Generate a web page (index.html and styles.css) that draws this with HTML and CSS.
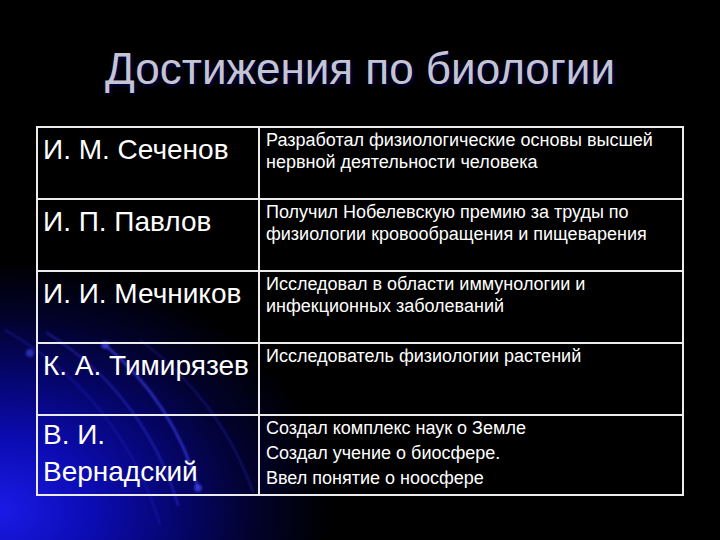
FILE: index.html
```html
<!DOCTYPE html>
<html lang="ru">
<head>
<meta charset="utf-8">
<title>Достижения по биологии</title>
<link rel="stylesheet" href="styles.css">
</head>
<body>
<div class="slide">
  <svg class="arcs" width="720" height="540" viewBox="0 0 720 540" aria-hidden="true">
    <g fill="none" stroke-linecap="round">
      <path d="M 105 345 A 285 285 0 0 1 198 488" stroke="#4040f4" stroke-width="2.5" opacity="0.7"/>
      <path d="M 47 333 A 300 300 0 0 1 178 505" stroke="#3434e0" stroke-width="2" opacity="0.55"/>
      <path d="M 5 330 A 330 330 0 0 1 160 525" stroke="#2a2ad0" stroke-width="1.5" opacity="0.45"/>
      <path d="M 140 340 A 320 320 0 0 1 253 492" stroke="#3030dc" stroke-width="1.5" opacity="0.45"/>
    </g>
    <circle cx="30" cy="353" r="4" fill="#4a4aff" opacity="0.55"/>
    <circle cx="105" cy="345" r="4" fill="#4a4aff" opacity="0.6"/>
    <circle cx="198" cy="488" r="4" fill="#4a4aff" opacity="0.6"/>
  </svg>
  <h1 class="title">Достижения по биологии</h1>
  <table class="grid">
    <tr class="row">
      <td class="name">И. М. Сеченов</td>
      <td class="desc">Разработал физиологические основы высшей нервной деятельности человека</td>
    </tr>
    <tr class="row">
      <td class="name">И. П. Павлов</td>
      <td class="desc">Получил Нобелевскую премию за труды по физиологии кровообращения и пищеварения</td>
    </tr>
    <tr class="row">
      <td class="name">И. И. Мечников</td>
      <td class="desc">Исследовал в области иммунологии и инфекционных заболеваний</td>
    </tr>
    <tr class="row">
      <td class="name">К. А. Тимирязев</td>
      <td class="desc">Исследователь физиологии растений</td>
    </tr>
    <tr class="row row-tall">
      <td class="name name-wrap">В. И.<br>Вернадский</td>
      <td class="desc desc-list">Создал комплекс наук о Земле<br>Создал учение о биосфере.<br>Ввел понятие о ноосфере</td>
    </tr>
  </table>
</div>
</body>
</html>
```
FILE: styles.css
```css
html, body {
  margin: 0;
  padding: 0;
  background: #000;
}

.slide {
  position: relative;
  width: 720px;
  height: 540px;
  overflow: hidden;
  box-sizing: border-box;
  padding-top: 44px;
  font-family: "Liberation Sans", Arial, sans-serif;
  color: #fff;
  background:
    radial-gradient(ellipse 330px 250px at 0px 510px, #1a1ae6 0%, #0c0cb4 28%, #05056a 55%, #02022a 78%, #000 100%),
    #000;
}

.arcs {
  position: absolute;
  left: 0;
  top: 0;
  filter: blur(1px);
}

.title {
  position: relative;
  margin: 0 0 32px;
  font-weight: normal;
  font-size: 44px;
  line-height: 50px;
  text-align: center;
  color: #c4c4d2;
  text-shadow: 2px 2px 3px #00004a;
}

.grid {
  position: relative;
  margin-left: 36px;
  width: 648px;
  border-collapse: collapse;
  table-layout: fixed;
}

.row {
  height: 72px;
}

.row-tall {
  height: 80px;
}

.grid td {
  border: 2px solid #ececec;
  vertical-align: top;
  padding: 0;
}

.name {
  width: 222px;
  box-sizing: border-box;
  padding: 6px 0 0 5px !important;
  font-size: 28px;
  line-height: 32px;
}

.name-wrap {
  line-height: 37px;
  padding-top: 0 !important;
}

.desc {
  padding: 1px 6px 0 6px !important;
  font-size: 18px;
  line-height: 22px;
}

.desc-list {
  line-height: 25px;
  padding-top: 0 !important;
}
```
